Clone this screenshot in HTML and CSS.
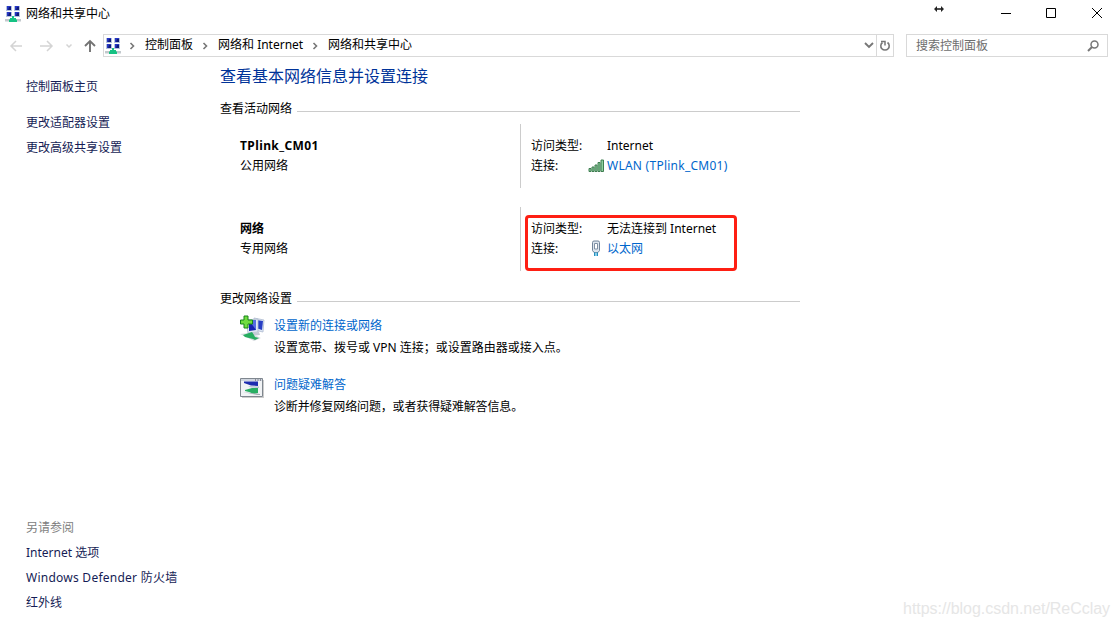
FILE: index.html
```html
<!DOCTYPE html>
<html lang="zh-CN">
<head>
    <meta charset="UTF-8">
    <title>网络和共享中心</title>
    <link rel="stylesheet" href="styles.css">
</head>
<body>
    <svg class="defs" width="0" height="0">
        <symbol id="network-icon" viewBox="0 0 16 16">
            <path d="M1 0h6v5H1zM9 0h6v5H9zM1 6h6v5H1zM9 6h6v5H9z" fill="#b4c2dc"/>
            <path d="M2 0h4v4H2zM10 0h4v4h-4zM2 6h4v4H2zM10 6h4v4h-4z" fill="#2636c4"/>
            <path d="M4 1h2v3H3zM12 1h2v3h-3zM4 7h2v3H3zM12 7h2v3h-3z" fill="#101a78"/>
            <path d="M0 13h16v2.500H0z" fill="#c3c9cd"/>
            <path d="M7 10h2v2h2v1.500h1V16H4v-2.500h1V12h2z" fill="#16c283"/>
        </symbol>
        <symbol id="chevron-icon" viewBox="0 0 6 8">
            <path d="M1.500 1L4.500 4L1.500 7" fill="none" stroke="#777" stroke-width="1.600"/>
        </symbol>
    </svg>

    <div class="window">
        <header class="title-bar">
            <svg class="app-icon" width="16" height="16"><use href="#network-icon"/></svg>
            <span class="title">网络和共享中心</span>
            <svg class="resize-icon" width="12" height="8" viewBox="0 0 12 8">
                <path d="M2 4h8" stroke="#222" stroke-width="1.600"/>
                <path d="M4 1v6L1 4zM8 1v6l3-3z" fill="#222"/>
            </svg>
            <svg class="window-buttons" width="103" height="12" viewBox="0 0 103 12">
                <path d="M1 6.500h10M46.500 1.500h9v9h-9zM92 1l10 10M102 1L92 11" fill="none" stroke="#000"/>
            </svg>
        </header>

        <nav class="nav-bar">
            <svg class="nav-arrows" width="92" height="14" viewBox="0 0 92 14">
                <g fill="none" stroke="#d4d4d4" stroke-width="1.500">
                    <path d="M4 7h11M9 2L4 7l5 5"/>
                    <path d="M33 7h12M40 2l5 5-5 5"/>
                    <path d="M59.500 5.500l2.500 2.500 2.500-2.500"/>
                </g>
                <path d="M83 13V2M78 7l5-5 5 5" fill="none" stroke="#737373" stroke-width="1.900"/>
            </svg>
            <div class="address">
                <svg width="16" height="16"><use href="#network-icon"/></svg>
                <svg class="chevron first" width="6" height="8"><use href="#chevron-icon"/></svg>
                <span>控制面板</span>
                <svg class="chevron" width="6" height="8"><use href="#chevron-icon"/></svg>
                <span class="crumb-internet">网络和 Internet</span>
                <svg class="chevron" width="6" height="8"><use href="#chevron-icon"/></svg>
                <span>网络和共享中心</span>
                <svg class="dropdown" width="10" height="7" viewBox="0 0 10 7">
                    <path d="M1 1l4 4 4-4" fill="none" stroke="#777" stroke-width="1.900"/>
                </svg>
                <div class="refresh">
                    <svg width="12" height="12" viewBox="0 0 12 12">
                        <path d="M8.500 2.500A4.200 4.200 0 1 1 3.500 2.500" fill="none" stroke="#777" stroke-width="1.600"/>
                        <path d="M2 1.500h4v4" fill="none" stroke="#777" stroke-width="1.500"/>
                    </svg>
                </div>
            </div>
            <div class="search">
                <span>搜索控制面板</span>
                <svg width="12" height="12" viewBox="0 0 12 12">
                    <circle cx="7.500" cy="4.500" r="3.500" fill="none" stroke="#777" stroke-width="1.500"/>
                    <path d="M5 7L1 11" stroke="#777" stroke-width="2"/>
                </svg>
            </div>
        </nav>

        <div class="content">
            <aside class="sidebar">
                <a class="home-link">控制面板主页</a>
                <a>更改适配器设置</a>
                <a>更改高级共享设置</a>
                <div class="see-also">
                    <span>另请参阅</span>
                    <a>Internet 选项</a>
                    <a class="wide">Windows Defender 防火墙</a>
                    <a>红外线</a>
                </div>
            </aside>

            <main class="main">
                <h1>查看基本网络信息并设置连接</h1>

                <h2 class="section-title">查看活动网络</h2>
                <section class="network">
                    <div class="network-name">
                        <strong class="wider">TPlink_CM01</strong>
                        <span>公用网络</span>
                    </div>
                    <div class="network-info">
                        <div class="info-row">
                            <span class="label">访问类型:</span>
                            <span>Internet</span>
                        </div>
                        <div class="info-row">
                            <span class="label">连接:</span>
                            <svg class="conn-icon" width="17" height="14" viewBox="0 0 17 14">
                                <path d="M1 9.500h2v3H1zM4 8h2v4.500H4zM7 6h2v6.500H7zM10 3.500h2v9h-2zM13 1h2.500v11.500H13z" fill="#8fd09f" stroke="#3f7d50"/>
                            </svg>
                            <a class="link wide">WLAN (TPlink_CM01)</a>
                        </div>
                    </div>
                </section>

                <section class="network">
                    <div class="network-name">
                        <strong>网络</strong>
                        <span>专用网络</span>
                    </div>
                    <div class="network-info">
                        <div class="info-row">
                            <span class="label">访问类型:</span>
                            <span>无法连接到 Internet</span>
                        </div>
                        <div class="info-row">
                            <span class="label">连接:</span>
                            <svg class="conn-icon" width="17" height="18" viewBox="0 0 17 18">
                                <path d="M4.500 2.500q0-1.500 1.500-1.500h4q1.500 0 1.500 1.500v8l-1.500 2h-4l-1.500-2z" fill="#dde5ee" stroke="#71849a"/>
                                <path d="M6.500 3.500h3v5.500h-3z" fill="#fff" stroke="#7f90a4"/>
                                <path d="M6 12.500h1.500V16H6zM8.500 12.500H10V16H8.500z" fill="#2390c0"/>
                                <path d="M7.500 12.500h1V16h-1z" fill="#7fd0ee"/>
                            </svg>
                            <a class="link">以太网</a>
                        </div>
                    </div>
                    <div class="highlight"></div>
                </section>

                <h2 class="section-title settings-title">更改网络设置</h2>
                <section class="task">
                    <svg width="25" height="28" viewBox="0 0 25 28">
                        <path d="M14 3l10 2-1 12-9-2z" fill="#dce5f3" stroke="#aebbd0" stroke-width=".8"/>
                        <path d="M16 5l7 1-1 9-6-2z" fill="#293fc4"/>
                        <path d="M6 5l12-1v13l-10 1z" fill="#e1e8f2" stroke="#aab7cb" stroke-width=".8"/>
                        <path d="M9 6l7-1v10l-7 1z" fill="#1723b0"/>
                        <path d="M13 5h3v10l-5-7z" fill="#566ce0"/>
                        <path d="M10 18l9-1 1 3-8 1z" fill="#c3cbd5"/>
                        <path d="M0 19l9-1 12 5-7 3z" fill="#d6dbdf"/>
                        <path d="M3 20l9-3 2 3 1 2 4 1-4 2-2-1-8-2z" fill="#27ad60"/>
                        <path d="M4 1h4v4h4.500v4H8v4H4V9H.5V5H4z" fill="#71dd3f" stroke="#168419"/>
                    </svg>
                    <div class="task-text">
                        <a class="link">设置新的连接或网络</a>
                        <span>设置宽带、拨号或 VPN 连接；或设置路由器或接入点。</span>
                    </div>
                </section>
                <section class="task">
                    <svg width="25" height="28" viewBox="0 0 25 28">
                        <path d="M2 23h21V6h1v18H2z" fill="#ccc"/>
                        <path d="M.5 4.500h22v18H.5z" fill="#f1f3f5" stroke="#7f878f"/>
                        <path d="M1 5h21v2H1z" fill="#d0d6df"/>
                        <path d="M15 5.500h1v1h-1zM17.500 5.500h1v1h-1zM20 5.500h1v1h-1z" fill="#445"/>
                        <path d="M4 7.500h14V12l-7-.5-7-2.500z" fill="#1d2daf"/>
                        <path d="M8 12l11 .5V14l-8-.5z" fill="#bac3d3"/>
                        <path d="M5 16l7-2h6v5l-4 1-5-2-4-1z" fill="#28ae62"/>
                        <path d="M3 18l14 3h3v-1l-9-1z" fill="#a4adb2"/>
                    </svg>
                    <div class="task-text">
                        <a class="link">问题疑难解答</a>
                        <span class="tight">诊断并修复网络问题，或者获得疑难解答信息。</span>
                    </div>
                </section>
            </main>
        </div>

        <div class="watermark">https://blog.csdn.net/ReCclay</div>
    </div>
</body>
</html>
```

FILE: styles.css
```css
* {
	box-sizing: border-box;
}

body {
	margin: 0;
	background-color: #fff;
	color: #000;
	font-family: "Noto Sans", "Noto Sans CJK SC", sans-serif;
	font-size: 12px;
	line-height: 20px;
}

svg {
	display: block;
	flex-shrink: 0;
}

.defs {
	position: absolute;
}

.window {
	position: relative;
	display: flex;
	flex-direction: column;
	height: 627px;
	overflow: hidden;
	white-space: nowrap;
}

.title-bar {
	display: flex;
	align-items: center;
	height: 27px;
	padding: 0 16px 0 5px;
}

.title {
	margin-left: 5px;
}

.resize-icon {
	margin: 0 55px 9px auto;
}

.window-buttons {
	margin-bottom: 1px;
}

.nav-bar {
	display: flex;
	align-items: center;
	height: 23px;
	margin-top: 7px;
	padding: 0 11px 0 7px;
}

.nav-arrows {
	margin-right: 4px;
}

.address {
	display: flex;
	align-items: center;
	width: 791px;
	height: 23px;
	padding-left: 1px;
	border: 1px solid #d9d9d9;
}

.address span {
	margin-top: -1px;
}

.chevron {
	margin: 0 10px 0 9px;
}

.chevron.first {
	margin-left: 8px;
}

.crumb-internet {
	width: 85px;
}

.dropdown {
	margin: 0 2px 0 auto;
}

.refresh {
	display: flex;
	align-items: center;
	justify-content: center;
	width: 17px;
	height: 21px;
	border-left: 1px solid #d9d9d9;
}

.search {
	display: flex;
	align-items: center;
	justify-content: space-between;
	width: 202px;
	height: 23px;
	margin-left: 12px;
	padding: 0 8px 0 9px;
	border: 1px solid #d9d9d9;
	color: #6d6d6d;
}

.content {
	display: flex;
	flex: 1;
}

.sidebar {
	display: flex;
	flex-direction: column;
	width: 220px;
	padding: 17px 0 12px 26px;
	color: #151c55;
	line-height: 25px;
}

.home-link {
	margin-bottom: 11px;
}

.see-also {
	display: flex;
	flex-direction: column;
	margin-top: auto;
}

.see-also span {
	color: #808080;
}

.main {
	width: 580px;
}

h1 {
	margin: 7px 0 0;
	color: #003399;
	font-size: 16px;
	font-weight: normal;
	line-height: 24px;
}

.section-title {
	display: flex;
	align-items: center;
	margin: 11px 0 5px;
	font-size: 12px;
	font-weight: normal;
}

.section-title::after {
	content: '';
	flex: 1;
	height: 1px;
	margin: 5px 0 0 5px;
	background-color: #ccc;
}

.network {
	position: relative;
	display: flex;
	height: 64px;
	margin-bottom: 19px;
}

.network-name {
	display: flex;
	flex-direction: column;
	width: 300px;
	padding: 12px 0 0 20px;
}

.network-info {
	flex: 1;
	padding: 12px 0 0 10px;
	border-left: 1px solid #ccc;
}

.info-row {
	display: flex;
	align-items: center;
	height: 20px;
}

.label {
	width: 76px;
}

.conn-icon {
	margin: 0 2px 0 -19px;
}

.link {
	color: #0066cc;
}

.wide {
	letter-spacing: 0.25px;
}

.wider {
	letter-spacing: 0.4px;
}

.tight {
	letter-spacing: -0.14px;
}

/* red frame around the broken connection */
.highlight {
	position: absolute;
	top: 8px;
	left: 305px;
	width: 212px;
	height: 56px;
	border: 3px solid #fe1f13;
	border-radius: 4px;
}

.settings-title {
	margin: -1px 0 6px;
}

.task {
	display: flex;
	height: 59px;
	padding-left: 20px;
}

.task-text {
	display: flex;
	flex-direction: column;
	padding-left: 9px;
	line-height: 22px;
}

.watermark {
	position: absolute;
	right: 9px;
	bottom: 8px;
	color: #e6e6e6;
	font-family: "Liberation Sans", sans-serif;
	font-size: 16px;
	letter-spacing: -0.04px;
	line-height: 20px;
}
```
